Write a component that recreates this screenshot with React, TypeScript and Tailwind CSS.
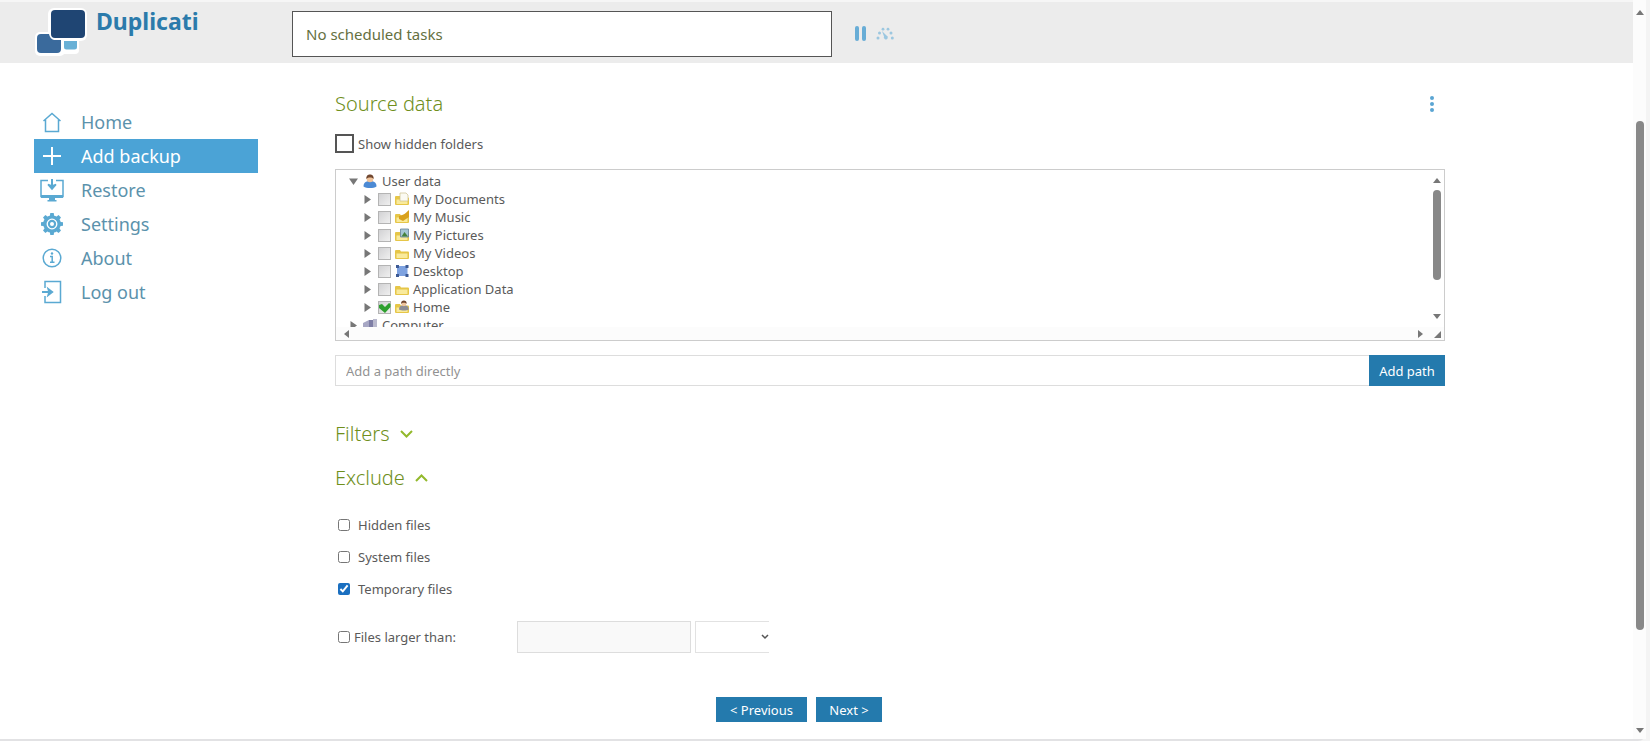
import type { ReactNode } from 'react';

const line = { fill: 'none', stroke: 'currentColor', strokeWidth: 1.5 } as const;

function HomeIcon() {
  return (
    <svg width="24" height="24" viewBox="0 0 24 24" {...line}>
      <path d="M3.5 11 12 3.500l8.500 7.500M5.500 9.500V21.500h13V9.500" />
    </svg>
  );
}

function PlusIcon() {
  return (
    <svg width="24" height="24" viewBox="0 0 24 24" {...line} strokeWidth={2}>
      <path d="M12 3v18M3 12h18" />
    </svg>
  );
}

function RestoreIcon() {
  return (
    <svg width="24" height="24" viewBox="0 0 24 24" {...line}>
      <path d="M8 2.500H1v16h22v-16h-7" />
      <path d="M1 17h22v3H1zM9 20h6v2H9zM7.500 22h9v1.500h-9z" fill="currentColor" stroke="none" />
      <path d="M12 1v8" strokeWidth="2" />
      <path d="M8 6.500 12 11l4-4.500-4 1.500z" fill="currentColor" />
    </svg>
  );
}

function GearIcon() {
  return (
    <svg width="24" height="24" viewBox="0 0 24 24">
      <g fill="currentColor">
        {[0, 45, 90, 135, 180, 225, 270, 315].map((a) => (
          <path key={a} d="M9.700 5 10.300 1h3.400l.6 4z" transform={`rotate(${a} 12 12)`} />
        ))}
        <circle cx="12" cy="12" r="8.800" />
      </g>
      <circle cx="12" cy="12" r="4.800" fill="none" stroke="#fff" strokeWidth="1.300" />
      <circle cx="12" cy="12" r="2" fill="#fff" />
    </svg>
  );
}

function InfoIcon() {
  return (
    <svg width="24" height="24" viewBox="0 0 24 24" {...line}>
      <circle cx="12" cy="12" r="8.800" />
      <path d="M10 10.500h2.200V16M10 16.300h4.500" />
      <circle cx="12" cy="7.500" r="1.200" fill="currentColor" stroke="none" />
    </svg>
  );
}

function LogoutIcon() {
  return (
    <svg width="24" height="24" viewBox="0 0 24 24" {...line}>
      <path d="M5 8V1.500h15.500v21H5V16" />
      <path d="M2 12h8" strokeWidth="2" />
      <path d="M8 8.500l4.500 3.500L8 15.500l1-3.500z" fill="currentColor" />
    </svg>
  );
}

function Logo() {
  return (
    <svg width="52" height="50" viewBox="0 0 52 50" aria-hidden="true">
      <g fill="#fff">
        <rect x="13" y="1" width="39" height="33" rx="6" />
        <rect x="0" y="25" width="30" height="24" rx="5" />
        <rect x="24" y="30" width="20" height="17" rx="4" />
      </g>
      <path d="M2 31a4 4 0 0 1 4-4h8q1 5 5 6h7v9a4 4 0 0 1-4 4H6a4 4 0 0 1-4-4z" fill="#3a6a9c" />
      <rect x="16" y="3" width="34" height="28" rx="4" fill="#1f4573" />
      <path d="M29 34h13v6a2.500 2.500 0 0 1-2.500 2.500H31.500A2.500 2.500 0 0 1 29 40z" fill="#68b0d6" />
    </svg>
  );
}

function ThrottleIcon() {
  return (
    <svg width="18" height="14" viewBox="0 0 18 14" fill="#9cc7e0">
      <circle cx="2" cy="11" r="1.500" />
      <circle cx="3.500" cy="6" r="1.500" />
      <circle cx="7" cy="2.200" r="1.400" />
      <circle cx="12" cy="2.200" r="1.400" />
      <circle cx="15" cy="6" r="1.500" />
      <circle cx="16.300" cy="11" r="1.500" />
      <path d="M6 4l4.500 4.500a2 2 0 1 1-2.500 1z" />
    </svg>
  );
}

function Arrow({ dir }: { dir: 'up' | 'down' | 'left' | 'right' | 'corner' }) {
  const d = {
    up: 'M0 6 4 1l4 5z',
    down: 'M0 2h8L4 7z',
    left: 'M6 0v8L1 4z',
    right: 'M2 0v8l5-4z',
    corner: 'M8 1v7H1z',
  }[dir];
  return (
    <svg className="shrink-0" width="8" height="8" viewBox="0 0 8 8" fill="#777">
      <path d={d} />
    </svg>
  );
}

type Kind = 'user' | 'docs' | 'music' | 'pictures' | 'folder' | 'desktop' | 'home' | 'computer';

function Person({ x, y, s, body }: { x: number; y: number; s: number; body: string }) {
  return (
    <g transform={`translate(${x} ${y}) scale(${s})`}>
      <path d="M0 12.500c0-4 2.500-5.500 6.500-5.500s6.500 1.500 6.500 5.500c-3 2-10 2-13 0z" fill={body} />
      <circle cx="6.500" cy="5" r="3.300" fill="#f0c49c" />
      <path d="M2.800 5C2.500 1.800 4.500.5 6.500.5s4 1.300 3.700 4.500C9 4 8.500 3.500 6.500 3.500S4 4 2.800 5z" fill="#71472f" />
    </g>
  );
}

function TreeIcon({ kind }: { kind: Kind }) {
  let art: ReactNode;
  if (kind === 'user') {
    art = <Person x={0.5} y={0} s={1} body="#4c8ad4" />;
  } else if (kind === 'desktop') {
    art = (
      <>
        <rect x="2" y="2" width="10.500" height="10" fill="#7ea2e0" />
        <path d="M1 1h3v3H1zM10.500 1h3v3h-3zM1 10h3v3H1zM10.500 10h3v3h-3z" fill="#3d5a94" />
      </>
    );
  } else if (kind === 'computer') {
    art = (
      <>
        <path d="M0 5l6-3v10l-6-1z" fill="#a7a7c4" />
        <path d="M6 2h4v11H6z" fill="#7e7ea5" />
        <path d="M10 1h4v11h-4z" fill="#b9b9cd" />
      </>
    );
  } else {
    art = (
      <>
        <path d="M0 5q0-1 1-1h4l1 1.500H13q1 0 1 1V12q0 1-1 1H1q-1 0-1-1z" fill="#e6c648" />
        <path d="M1.500 7.500h11V12h-11z" fill="#f9ea9c" />
        {kind === 'docs' && <path d="M5 1h6l2 2v6H5z" fill="#fbfaf2" stroke="#cbbf8e" strokeWidth=".7" />}
        {kind === 'music' && <path d="M4 6c4-1 6-2 10-6v7L8 11 4 9z" fill="#d9a11c" />}
        {kind === 'pictures' && (
          <>
            <path d="M5.500 1h8v8h-8z" fill="#a5c6d4" stroke="#65809a" strokeWidth=".8" />
            <path d="M6.500 8.500l3-4.500 3.500 4.500z" fill="#46823c" />
          </>
        )}
        {kind === 'home' && <Person x={4} y={0} s={0.75} body="#8d8d95" />}
      </>
    );
  }
  return (
    <svg className="shrink-0" width="14" height="14" viewBox="0 0 14 14" aria-hidden="true">
      {art}
    </svg>
  );
}

function Toggle({ open }: { open?: boolean }) {
  return (
    <button type="button" aria-label={open ? 'Collapse' : 'Expand'} className="flex w-[10px] shrink-0 justify-center">
      <svg width="9" height="9" viewBox="0 0 9 9" fill="#777">
        <path d={open ? 'M0 1.500h9L4.500 8z' : 'M1.500 0v9L8 4.500z'} />
      </svg>
    </button>
  );
}

const folders: { name: string; kind: Kind; checked?: boolean }[] = [
  { name: 'My Documents', kind: 'docs' },
  { name: 'My Music', kind: 'music' },
  { name: 'My Pictures', kind: 'pictures' },
  { name: 'My Videos', kind: 'folder' },
  { name: 'Desktop', kind: 'desktop' },
  { name: 'Application Data', kind: 'folder' },
  { name: 'Home', kind: 'home', checked: true },
];

const nav = [
  { name: 'Home', icon: <HomeIcon /> },
  { name: 'Add backup', icon: <PlusIcon />, active: true },
  { name: 'Restore', icon: <RestoreIcon /> },
  { name: 'Settings', icon: <GearIcon /> },
  { name: 'About', icon: <InfoIcon /> },
  { name: 'Log out', icon: <LogoutIcon /> },
];

function FolderRow({ name, kind, checked }: { name: string; kind: Kind; checked?: boolean }) {
  return (
    <li className="flex h-[18px] items-center pl-[26px]">
      <Toggle />
      <label className="ml-[6px] flex items-center">
        <input
          type="checkbox"
          defaultChecked={checked}
          className="peer size-[13px] shrink-0 appearance-none border border-[#b4b4b4] bg-linear-to-br from-[#d2d2d4] to-[#f0f0f0]"
        />
        <svg className="-ml-[13px] hidden peer-checked:block" width="13" height="13" viewBox="0 0 13 13">
          <path d="M1 4l3-1 3 3 4-4 1.500 1v3L7 12 1 7z" fill="#2ea02e" />
        </svg>
        <span className="ml-[4px] flex items-center gap-[4px]">
          <TreeIcon kind={kind} />
          {name}
        </span>
      </label>
    </li>
  );
}

function Chevron({ up }: { up?: boolean }) {
  return (
    <svg width="13" height="8" viewBox="0 0 13 8" fill="none" stroke="#93b92c" strokeWidth="2">
      <path d={up ? 'M1 7l5.500-5.500L12 7' : 'M1 1l5.500 5.500L12 1'} />
    </svg>
  );
}

function Exclude({ label, checked }: { label: string; checked?: boolean }) {
  return (
    <label className="flex h-[32px] items-center gap-[8px] pl-[3px]">
      <input type="checkbox" defaultChecked={checked} className="size-[12px] accent-[#1a6fc0]" />
      {label}
    </label>
  );
}

export default function App() {
  return (
    <div className="flex min-h-screen bg-[#f4f4f4] font-['Noto_Sans','Open_Sans',sans-serif] text-[13px] leading-[18px] text-[#5a5a5a]">
      <div className="flex flex-1 rounded-br-lg border-b-2 border-[#e2e2e4] bg-white">
        <div className="flex flex-1 flex-col">
          <header className="flex h-[63px] items-center border-t-2 border-[#f6f6f6] bg-[#ececec] pt-[2px]">
            <a href="#home" className="flex h-full w-[292px] shrink-0 items-start gap-[9px] pt-[3px] pl-[35px]">
              <Logo />
              <span className="text-[23px] leading-[28px] font-bold text-[#2b7bab]">Duplicati</span>
            </a>
            <div className="flex h-[46px] w-[540px] items-center border border-[#555] bg-white px-[13px] text-[15px] text-[#65703f]">
              No scheduled tasks
            </div>
            <button type="button" aria-label="Pause" className="ml-[23px] flex gap-[3px]">
              <span className="h-[15px] w-[4px] rounded-xs bg-[#68add6]" />
              <span className="h-[15px] w-[4px] rounded-xs bg-[#68add6]" />
            </button>
            <button type="button" aria-label="Throttle" className="ml-[10px]">
              <ThrottleIcon />
            </button>
          </header>

          <div className="flex flex-1">
            <nav className="w-[258px] shrink-0 pt-[42px] pl-[34px]">
              {nav.map((n) => (
                <a
                  key={n.name}
                  href={`#${n.name}`}
                  className={
                    n.active
                      ? 'flex h-[34px] items-center gap-[17px] bg-[#4ba3d6] pl-[6px] text-white'
                      : 'flex h-[34px] items-center gap-[17px] pl-[6px] text-[#5aa9d2]'
                  }
                >
                  {n.icon}
                  <span className={n.active ? 'text-[18px]' : 'text-[18px] text-[#5b92ac]'}>{n.name}</span>
                </a>
              ))}
            </nav>

            <main className="mr-[188px] ml-[77px] flex-1 pt-[27px]">
              <div className="flex h-[28px] items-center justify-between">
                <h2 className="text-[20px] font-light text-[#6f8f1c]">Source data</h2>
                <button type="button" aria-label="More" className="flex w-[26px] flex-col items-center gap-[2px]">
                  <span className="size-[4px] rounded-full bg-[#5aa5d3]" />
                  <span className="size-[4px] rounded-full bg-[#5aa5d3]" />
                  <span className="size-[4px] rounded-full bg-[#5aa5d3]" />
                </button>
              </div>

              <label className="mt-[16px] flex h-[19px] items-center gap-[4px]">
                <input type="checkbox" className="size-[19px] appearance-none border-2 border-[#555] bg-white checked:bg-[#247aad]" />
                Show hidden folders
              </label>

              <div className="mt-[16px] h-[172px] border border-[#ccc]">
                <div className="flex h-[157px]">
                  <ul className="flex-1 overflow-hidden pt-[2px]">
                    <li className="flex h-[18px] items-center gap-[5px] pl-[12px]">
                      <Toggle open />
                      <TreeIcon kind="user" />
                      User data
                    </li>
                    {folders.map((f) => (
                      <FolderRow key={f.name} {...f} />
                    ))}
                    <li className="flex h-[18px] items-center gap-[5px] pl-[12px]">
                      <Toggle />
                      <TreeIcon kind="computer" />
                      Computer
                    </li>
                  </ul>
                  <div className="flex w-[14px] flex-col items-center pt-[7px] pb-[7px]">
                    <Arrow dir="up" />
                    <span className="mt-[5px] mb-auto h-[90px] w-[8px] rounded-full bg-[#888]" />
                    <Arrow dir="down" />
                  </div>
                </div>
                <div className="flex h-[13px] items-center bg-[#fcfcfc] pr-[3px] pl-[7px]">
                  <Arrow dir="left" />
                  <span className="flex-1" />
                  <Arrow dir="right" />
                  <span className="w-[9px]" />
                  <Arrow dir="corner" />
                </div>
              </div>

              <form className="mt-[14px] flex h-[31px]" onSubmit={(e) => e.preventDefault()}>
                <input
                  type="text"
                  aria-label="Path"
                  placeholder="Add a path directly"
                  className="min-w-0 flex-1 border border-r-0 border-[#ddd] px-[10px] outline-none placeholder:text-[#929292]"
                />
                <button type="submit" className="w-[76px] bg-[#247aad] text-white">
                  Add path
                </button>
              </form>

              <h2 className="mt-[34px] text-[20px] leading-[28px] font-light text-[#6f8f1c]">
                <button type="button" className="flex items-center gap-[10px]">
                  Filters <Chevron />
                </button>
              </h2>
              <h2 className="mt-[16px] text-[20px] leading-[28px] font-light text-[#6f8f1c]">
                <button type="button" className="flex items-center gap-[10px]">
                  Exclude <Chevron up />
                </button>
              </h2>

              <div className="mt-[17px]">
                <Exclude label="Hidden files" />
                <Exclude label="System files" />
                <Exclude label="Temporary files" checked />
                <div className="mt-[16px] flex h-[32px]">
                  <label className="flex w-[182px] items-center gap-[4px] pl-[3px]">
                    <input type="checkbox" className="size-[12px]" />
                    Files larger than:
                  </label>
                  <input type="text" aria-label="Size" disabled className="w-[174px] border border-[#ddd] bg-[#f9f9f9]" />
                  <span className="ml-[4px] flex w-[74px] items-center border border-r-0 border-[#e2e2e2]">
                    <select aria-label="Unit" className="h-full flex-1 appearance-none bg-transparent" />
                    <svg className="-ml-[8px]" width="8" height="6" viewBox="0 0 8 6" fill="none" stroke="#555" strokeWidth="1.500">
                      <path d="M1 1l3 3 3-3" />
                    </svg>
                  </span>
                </div>
              </div>

              <div className="mt-[44px] flex justify-center gap-[9px] pr-[182px] text-white">
                <button type="button" className="h-[25px] w-[91px] bg-[#247aad]">
                  &lt; Previous
                </button>
                <button type="button" className="h-[25px] w-[66px] bg-[#247aad]">
                  Next &gt;
                </button>
              </div>
            </main>
          </div>
        </div>

        <div className="flex w-[13px] flex-col items-center bg-[#fcfcfc] pt-[9px] pb-[5px]">
          <Arrow dir="up" />
          <span className="grow-[104]" />
          <span className="w-[8px] grow-[510] rounded-full bg-[#888]" />
          <span className="grow-[96]" />
          <Arrow dir="down" />
        </div>
      </div>
      <div className="w-[4px]" />
    </div>
  );
}
